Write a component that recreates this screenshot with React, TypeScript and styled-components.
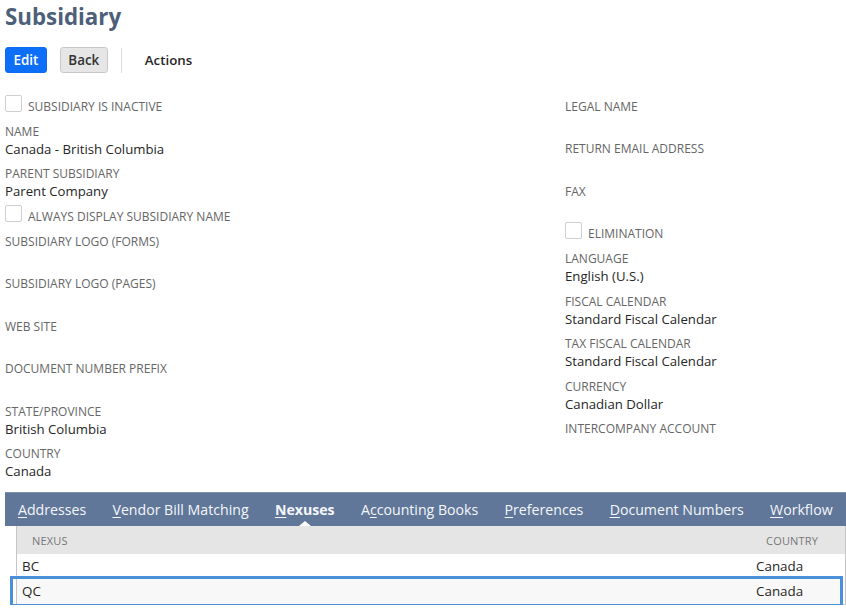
import React, { FC } from "react";
import styled, { createGlobalStyle } from "styled-components";

const GlobalStyle = createGlobalStyle`
  html, body {
    margin: 0;
    padding: 0;
    background: #ffffff;
    font-family: "Open Sans", "Liberation Sans", sans-serif;
    color: #262626;
    overflow: hidden;
  }
`;

const Page = styled.div`
  padding: 0 0 0 5px;
  width: 841px;
`;

const Title = styled.h1`
  margin: 0;
  padding-top: 1px;
  font-size: 22.3px;
  line-height: 32px;
  font-weight: 700;
  color: #4d5f79;
`;

const Toolbar = styled.div`
  display: flex;
  align-items: center;
  margin-top: 14px;
  height: 26px;
`;

const Button = styled.button<{ $primary?: boolean }>`
  height: 26px;
  padding: 0 7.5px;
  border-radius: 3px;
  font-family: inherit;
  font-size: 13.4px;
  font-weight: 600;
  line-height: 24px;
  cursor: pointer;
  border: 1px solid ${(p) => (p.$primary ? "#0d6bf5" : "#c9c9c9")};
  background: ${(p) => (p.$primary ? "#0d6ef7" : "#e6e6e6")};
  color: ${(p) => (p.$primary ? "#ffffff" : "#333333")};
  margin-right: 13px;
`;

const Divider = styled.div`
  width: 1px;
  height: 25px;
  background: #dcdcdc;
  margin: 0 23px 0 0;
`;

const Actions = styled.span`
  font-size: 13.3px;
  font-weight: 600;
  color: #262626;
`;

const Columns = styled.div`
  display: grid;
  grid-template-columns: 560px 1fr;
  margin-top: 24.5px;
  padding-bottom: 4.5px;
`;

const Column = styled.div`
  display: flex;
  flex-direction: column;
`;

const Field = styled.div`
  height: 42.5px;
`;

const Label = styled.div`
  font-size: 12px;
  line-height: 17px;
  color: #666666;
  text-transform: uppercase;
  white-space: nowrap;
`;

const Value = styled.div`
  font-size: 13.2px;
  line-height: 18px;
  color: #262626;
  white-space: nowrap;
`;

const CheckRow = styled.div`
  display: flex;
  align-items: flex-start;
  gap: 6px;
  height: 25px;
`;

const Box = styled.span`
  display: block;
  box-sizing: border-box;
  width: 17px;
  height: 17px;
  margin-top: -3px;
  border: 1px solid #cfcfcf;
  border-radius: 2px;
  background: #fff;
`;

const TabBar = styled.div`
  display: flex;
  align-items: center;
  gap: 26.3px;
  height: 34px;
  box-sizing: border-box;
  padding-left: 13px;
  background: #607799;
  border-top: 1px solid #7f92b0;
  white-space: nowrap;
`;

const Tab = styled.span<{ $active?: boolean }>`
  position: relative;
  font-size: 14.15px;
  line-height: 33px;
  color: #f4f6fa;
  font-weight: ${(p) => (p.$active ? 700 : 400)};

  u {
    text-decoration-thickness: 1px;
    text-underline-offset: 2px;
  }

  &::after {
    content: "";
    display: ${(p) => (p.$active ? "block" : "none")};
    position: absolute;
    left: 50%;
    bottom: 0;
    margin-left: -6px;
    border-left: 6px solid transparent;
    border-right: 6px solid transparent;
    border-bottom: 5px solid #ffffff;
  }
`;

const Table = styled.div`
  margin-left: 11px;
  border-left: 1px solid #c6c6c6;
  border-right: 1px solid #c6c6c6;
`;

const HeadRow = styled.div`
  display: grid;
  grid-template-columns: 1fr 94px;
  height: 28px;
  align-items: center;
  background: #e5e5e5;
  border-bottom: 1px solid #ffffff;
`;

const HeadCell = styled.div`
  padding-left: 15px;
  font-size: 11px;
  color: #777777;
  letter-spacing: 0.2px;
`;

const Row = styled.div<{ $selected?: boolean }>`
  position: relative;
  display: grid;
  grid-template-columns: 1fr 94px;
  align-items: center;
  height: ${(p) => (p.$selected ? "26px" : "22px")};
  background: ${(p) => (p.$selected ? "#f8f8f8" : "#ffffff")};
  border-bottom: 1px solid ${(p) => (p.$selected ? "#d0d0d0" : "transparent")};

  &::after {
    content: "";
    display: ${(p) => (p.$selected ? "block" : "none")};
    position: absolute;
    left: -7px;
    right: 2px;
    top: -2px;
    bottom: -3px;
    border: 3px solid #4a90d9;
    pointer-events: none;
  }
`;

const Cell = styled.div`
  padding-left: 5px;
  font-size: 13.4px;
  color: #262626;
`;

type Item =
  | { kind: "field"; label: string; value?: string }
  | { kind: "check"; label: string };

const left: Item[] = [
  { kind: "check", label: "Subsidiary is inactive" },
  { kind: "field", label: "Name", value: "Canada - British Columbia" },
  { kind: "field", label: "Parent Subsidiary", value: "Parent Company" },
  { kind: "check", label: "Always display subsidiary name" },
  { kind: "field", label: "Subsidiary Logo (Forms)" },
  { kind: "field", label: "Subsidiary Logo (Pages)" },
  { kind: "field", label: "Web Site" },
  { kind: "field", label: "Document Number Prefix" },
  { kind: "field", label: "State/Province", value: "British Columbia" },
  { kind: "field", label: "Country", value: "Canada" },
];

const right: Item[] = [
  { kind: "field", label: "Legal Name" },
  { kind: "field", label: "Return Email Address" },
  { kind: "field", label: "Fax" },
  { kind: "check", label: "Elimination" },
  { kind: "field", label: "Language", value: "English (U.S.)" },
  { kind: "field", label: "Fiscal Calendar", value: "Standard Fiscal Calendar" },
  { kind: "field", label: "Tax Fiscal Calendar", value: "Standard Fiscal Calendar" },
  { kind: "field", label: "Currency", value: "Canadian Dollar" },
  { kind: "field", label: "Intercompany Account" },
];

// [before, underlined key, after]
const tabs: [string, string, string][] = [
  ["", "A", "ddresses"],
  ["", "V", "endor Bill Matching"],
  ["", "N", "exuses"],
  ["A", "c", "counting Books"],
  ["", "P", "references"],
  ["", "D", "ocument Numbers"],
  ["", "W", "orkflow"],
];

const renderItem = (item: Item) =>
  item.kind === "check" ? (
    <CheckRow key={item.label}>
      <Box />
      <Label>{item.label}</Label>
    </CheckRow>
  ) : (
    <Field key={item.label}>
      <Label>{item.label}</Label>
      <Value>{item.value ?? ""}</Value>
    </Field>
  );

const App: FC = () => {
  return (
    <Page>
      <GlobalStyle />
      <Title>Subsidiary</Title>
      <Toolbar>
        <Button $primary>Edit</Button>
        <Button>Back</Button>
        <Divider />
        <Actions>Actions</Actions>
      </Toolbar>

      <Columns>
        <Column>{left.map(renderItem)}</Column>
        <Column>{right.map(renderItem)}</Column>
      </Columns>

      <TabBar>
        {tabs.map(([pre, key, rest]) => (
          <Tab key={key + rest} $active={rest === "exuses"}>
            {pre}
            <u>{key}</u>
            {rest}
          </Tab>
        ))}
      </TabBar>

      <Table>
        <HeadRow>
          <HeadCell>NEXUS</HeadCell>
          <HeadCell>COUNTRY</HeadCell>
        </HeadRow>
        <Row>
          <Cell>BC</Cell>
          <Cell>Canada</Cell>
        </Row>
        <Row $selected>
          <Cell>QC</Cell>
          <Cell>Canada</Cell>
        </Row>
      </Table>
    </Page>
  );
};

export default App;
